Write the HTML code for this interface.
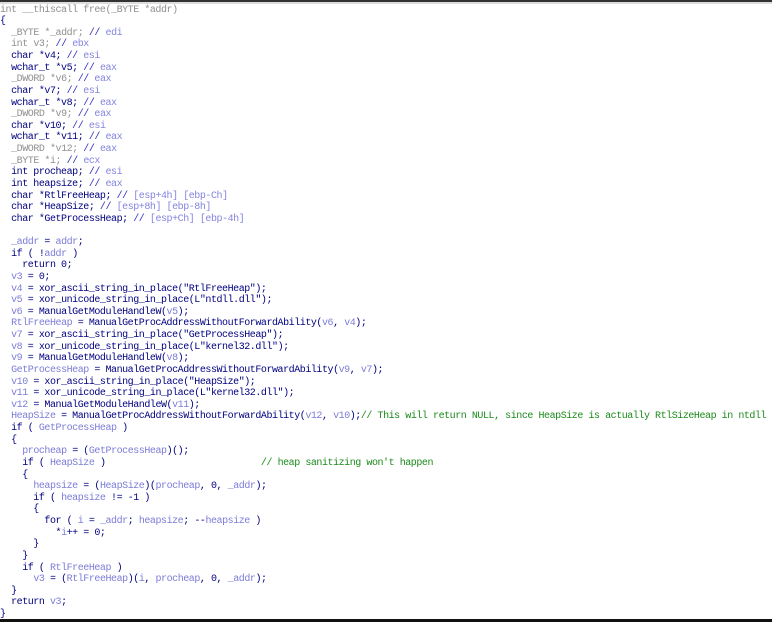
<!DOCTYPE html>
<html><head><style>
html,body{margin:0;padding:0;background:#fff;width:772px;height:622px;overflow:hidden;}
#top{position:absolute;left:0;top:0;width:772px;height:2px;background:#333;}
#top2{position:absolute;left:0;top:2px;width:772px;height:2px;background:#ddd;}
#bot{position:absolute;left:0;top:619px;width:772px;height:3px;background:#111;}
pre{position:absolute;left:0;top:4.5px;margin:0;font-family:"Liberation Mono",monospace;font-size:10px;letter-spacing:-0.45px;line-height:11.63px;color:#000080;}
.v{color:#7c7cd8}.g{color:#909090}.c{color:#1a8a1a}.b{color:#3030c0}.r{color:#8484e0}
</style></head><body>
<div id="top"></div><div id="top2"></div>
<pre><span class="g">int __thiscall free(_BYTE *addr)</span>
{
  <span class="g">_BYTE *_addr;</span> <span class="b">//</span> <span class="r">edi</span>
  <span class="g">int v3;</span> <span class="b">//</span> <span class="r">ebx</span>
  char *v4; <span class="b">//</span> <span class="r">esi</span>
  wchar_t *v5; <span class="b">//</span> <span class="r">eax</span>
  <span class="g">_DWORD *v6;</span> <span class="b">//</span> <span class="r">eax</span>
  char *v7; <span class="b">//</span> <span class="r">esi</span>
  wchar_t *v8; <span class="b">//</span> <span class="r">eax</span>
  <span class="g">_DWORD *v9;</span> <span class="b">//</span> <span class="r">eax</span>
  char *v10; <span class="b">//</span> <span class="r">esi</span>
  wchar_t *v11; <span class="b">//</span> <span class="r">eax</span>
  <span class="g">_DWORD *v12;</span> <span class="b">//</span> <span class="r">eax</span>
  <span class="g">_BYTE *i;</span> <span class="b">//</span> <span class="r">ecx</span>
  int procheap; <span class="b">//</span> <span class="r">esi</span>
  int heapsize; <span class="b">//</span> <span class="r">eax</span>
  char *RtlFreeHeap; <span class="b">//</span> <span class="r">[esp+4h] [ebp-Ch]</span>
  char *HeapSize; <span class="b">//</span> <span class="r">[esp+8h] [ebp-8h]</span>
  char *GetProcessHeap; <span class="b">//</span> <span class="r">[esp+Ch] [ebp-4h]</span>

  <span class="v">_addr</span> = <span class="v">addr</span>;
  if ( !<span class="v">addr</span> )
    return 0;
  <span class="v">v3</span> = 0;
  <span class="v">v4</span> = xor_ascii_string_in_place("RtlFreeHeap");
  <span class="v">v5</span> = xor_unicode_string_in_place(L"ntdll.dll");
  <span class="v">v6</span> = ManualGetModuleHandleW(<span class="v">v5</span>);
  <span class="v">RtlFreeHeap</span> = ManualGetProcAddressWithoutForwardAbility(<span class="v">v6</span>, <span class="v">v4</span>);
  <span class="v">v7</span> = xor_ascii_string_in_place("GetProcessHeap");
  <span class="v">v8</span> = xor_unicode_string_in_place(L"kernel32.dll");
  <span class="v">v9</span> = ManualGetModuleHandleW(<span class="v">v8</span>);
  <span class="v">GetProcessHeap</span> = ManualGetProcAddressWithoutForwardAbility(<span class="v">v9</span>, <span class="v">v7</span>);
  <span class="v">v10</span> = xor_ascii_string_in_place("HeapSize");
  <span class="v">v11</span> = xor_unicode_string_in_place(L"kernel32.dll");
  <span class="v">v12</span> = ManualGetModuleHandleW(<span class="v">v11</span>);
  <span class="v">HeapSize</span> = ManualGetProcAddressWithoutForwardAbility(<span class="v">v12</span>, <span class="v">v10</span>);<span class="c">// This will return NULL, since HeapSize is actually RtlSizeHeap in ntdll</span>
  if ( <span class="v">GetProcessHeap</span> )
  {
    <span class="v">procheap</span> = (<span class="v">GetProcessHeap</span>)();
    if ( <span class="v">HeapSize</span> )                            <span class="c">// heap sanitizing won't happen</span>
    {
      <span class="v">heapsize</span> = (<span class="v">HeapSize</span>)(<span class="v">procheap</span>, 0, <span class="v">_addr</span>);
      if ( <span class="v">heapsize</span> != -1 )
      {
        for ( <span class="v">i</span> = <span class="v">_addr</span>; <span class="v">heapsize</span>; --<span class="v">heapsize</span> )
          *<span class="v">i</span>++ = 0;
      }
    }
    if ( <span class="v">RtlFreeHeap</span> )
      <span class="v">v3</span> = (<span class="v">RtlFreeHeap</span>)(<span class="v">i</span>, <span class="v">procheap</span>, 0, <span class="v">_addr</span>);
  }
  return <span class="v">v3</span>;
}</pre>
<div id="bot"></div>
</body></html>
